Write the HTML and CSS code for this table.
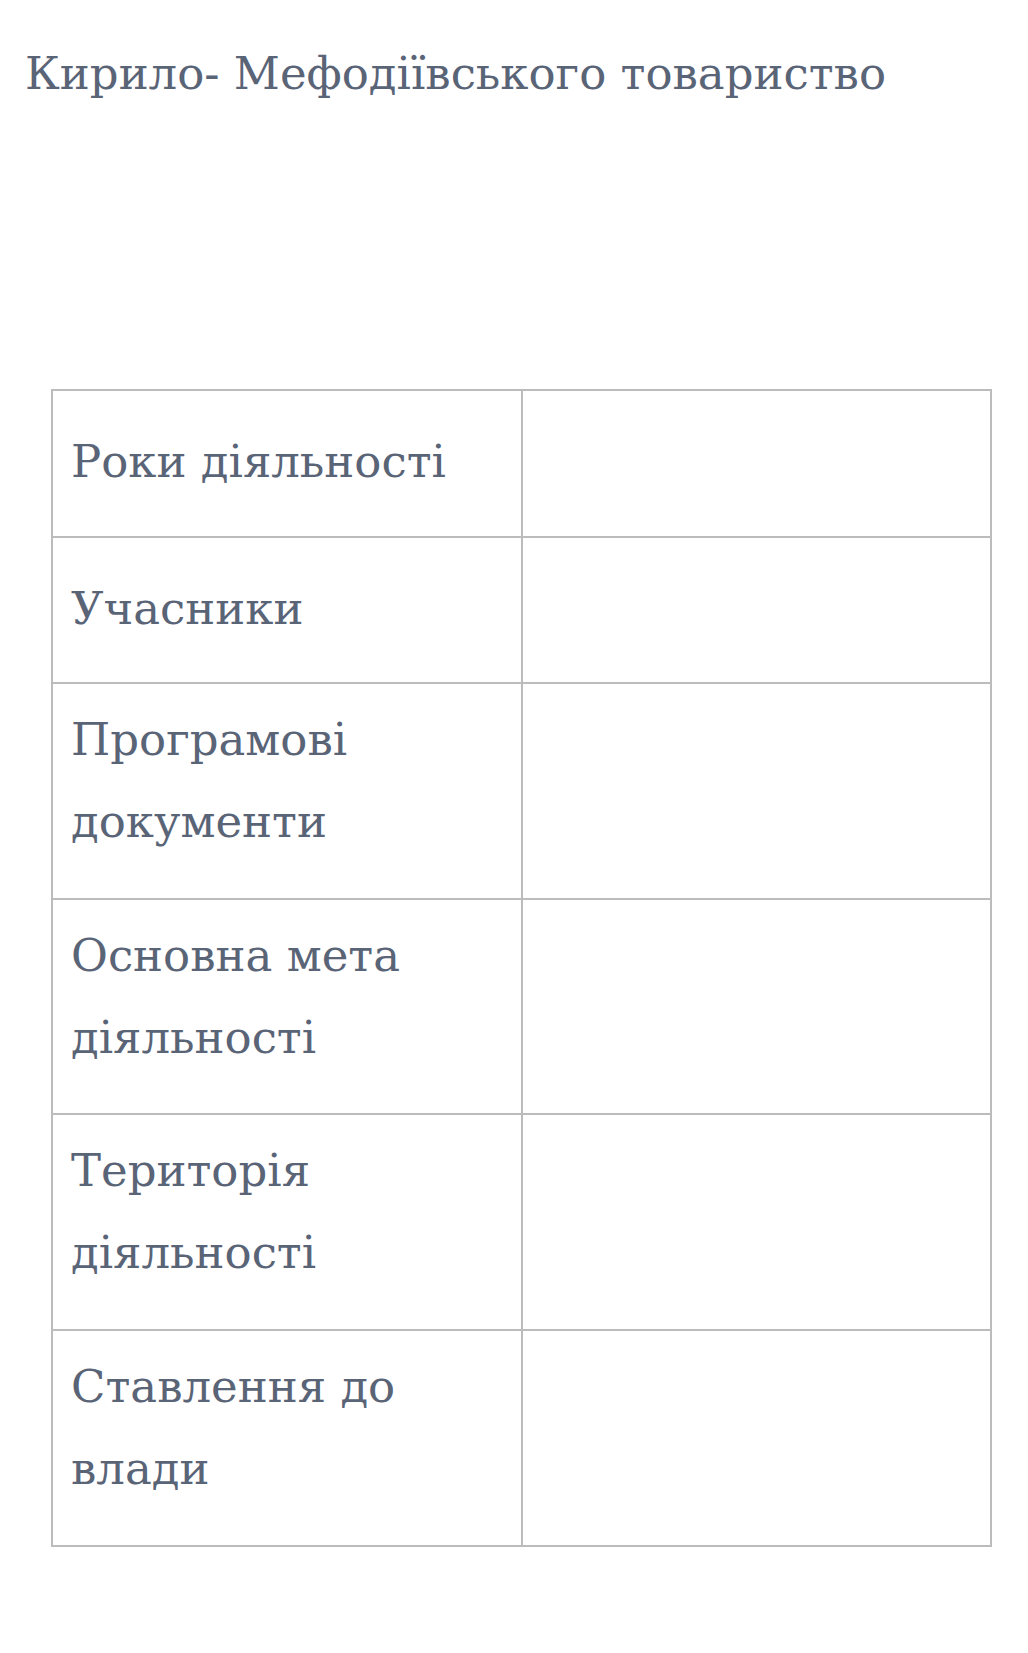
FILE: index.html
```html
<!DOCTYPE html>
<html lang="uk">
<head>
<meta charset="utf-8">
<link rel="stylesheet" href="styles.css">
</head>
<body>
<h1 class="title">Кирило- Мефодіївського товариство</h1>
<table class="grid">
  <tr class="single"><td class="label">Роки діяльності</td><td class="answer"></td></tr>
  <tr class="single"><td class="label">Учасники</td><td class="answer"></td></tr>
  <tr class="double"><td class="label">Програмові документи</td><td class="answer"></td></tr>
  <tr class="double"><td class="label">Основна мета діяльності</td><td class="answer"></td></tr>
  <tr class="double"><td class="label">Територія діяльності</td><td class="answer"></td></tr>
  <tr class="double"><td class="label">Ставлення до влади</td><td class="answer"></td></tr>
</table>
</body>
</html>
```
FILE: styles.css
```css
html, body {
  margin: 0;
  padding: 0;
  background: #ffffff;
}
body {
  font-family: "DejaVu Serif", "Liberation Serif", serif;
  color: #5a6477;
  width: 1028px;
  height: 1653px;
}
.title {
  margin: 0;
  padding: 42px 0 0 25px;
  font-size: 45px;
  font-weight: normal;
  line-height: 64px;
  white-space: nowrap;
}
.grid {
  margin: 283px 0 0 51px;
  width: 941px;
  border-collapse: collapse;
  table-layout: fixed;
}
.grid td {
  border: 2px solid #bcbcbc;
  vertical-align: top;
  font-size: 45px;
  line-height: 82px;
  padding: 0 18px;
  box-sizing: border-box;
}
.grid td.label {
  width: 470px;
}
.single td {
  height: 146.6px;
  padding-top: 30px;
}
.double td {
  height: 215.6px;
  padding-top: 15px;
}
```
